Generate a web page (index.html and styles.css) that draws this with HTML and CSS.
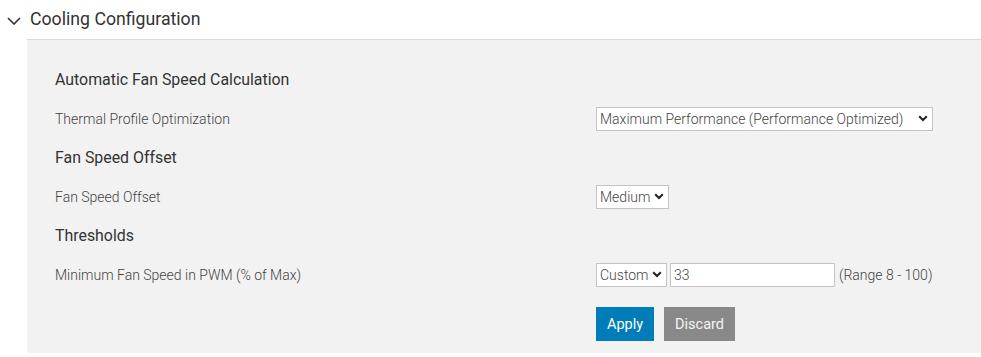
FILE: index.html
```html
<!DOCTYPE html>
<html>
<head>
<meta charset="utf-8">
<link rel="stylesheet" href="styles.css">
</head>
<body>
<div class="section">
  <div class="section-header">
    <svg class="chev" width="14" height="8" viewBox="0 0 14 8"><path d="M1 1 L7 7 L13 1" fill="none" stroke="#333" stroke-width="1.6"/></svg>
    <span class="section-title">Cooling Configuration</span>
  </div>
  <div class="panel">
    <div class="grid">
      <div class="heading">Automatic Fan Speed Calculation</div>
      <div class="label">Thermal Profile Optimization</div>
      <div class="control">
        <select class="sel sel-wide"><option>Maximum Performance (Performance Optimized)</option></select>
      </div>
      <div class="heading">Fan Speed Offset</div>
      <div class="label">Fan Speed Offset</div>
      <div class="control">
        <select class="sel sel-med"><option>Medium</option></select>
      </div>
      <div class="heading">Thresholds</div>
      <div class="label">Minimum Fan Speed in PWM (% of Max)</div>
      <div class="control">
        <select class="sel sel-custom"><option>Custom</option></select>
        <input class="txt" type="text" value="33">
        <span class="range">(Range 8 - 100)</span>
      </div>
      <div class="spacer"></div>
      <div class="buttons">
        <button class="btn btn-apply">Apply</button>
        <button class="btn btn-discard">Discard</button>
      </div>
    </div>
  </div>
</div>
</body>
</html>
```

FILE: styles.css
```css
html, body {
  margin: 0;
  padding: 0;
  background: #ffffff;
  font-family: Roboto, "Liberation Sans", sans-serif;
}

.section-header {
  height: 39px;
  display: flex;
  align-items: center;
  padding-left: 7px;
}

.chev {
  display: block;
  margin-top: 2px;
  margin-right: 9px;
}

.section-title {
  font-size: 17.7px;
  color: #333333;
  line-height: 39px;
}

.panel {
  margin-left: 27px;
  border-top: 1px solid #d9d9d9;
  background: #f2f2f2;
  padding: 20px 0 12px 28px;
}

.grid {
  display: grid;
  grid-template-columns: 541px auto;
  grid-template-rows: repeat(6, 39px) auto;
}

.heading {
  grid-column: 1 / 3;
  font-size: 15.9px;
  color: #333333;
  display: flex;
  align-items: center;
}

.label {
  font-size: 14px;
  font-weight: 300;
  color: #444444;
  display: flex;
  align-items: center;
}

.control {
  display: flex;
  align-items: center;
  gap: 3px;
}

.sel {
  appearance: none;
  -webkit-appearance: none;
  height: 24px;
  border: 1px solid #c4c4c4;
  border-radius: 0;
  background-color: #ffffff;
  background-image: url("data:image/svg+xml;utf8,<svg xmlns='http://www.w3.org/2000/svg' width='10' height='7' viewBox='0 0 10 7'><path d='M1.2 1.2 L5 5 L8.8 1.2' fill='none' stroke='%23222' stroke-width='2'/></svg>");
  background-repeat: no-repeat;
  background-position: right 4px center;
  font-family: Roboto, "Liberation Sans", sans-serif;
  font-size: 14px;
  font-weight: 300;
  color: #444444;
  padding: 0 16px 0 3px;
  margin: 0;
  outline: none;
}

.sel-wide { width: 337px; }
.sel-med { width: 73px; }
.sel-custom { width: 71px; }

.txt {
  width: 165px;
  height: 24px;
  box-sizing: border-box;
  border: 1px solid #c4c4c4;
  background: #ffffff;
  font-family: Roboto, "Liberation Sans", sans-serif;
  font-size: 14px;
  font-weight: 300;
  color: #444444;
  padding: 0 3px;
  margin: 0;
  outline: none;
}

.range {
  font-size: 14px;
  font-weight: 300;
  color: #444444;
  margin-left: 1px;
}

.spacer { grid-column: 1; }

.buttons {
  grid-column: 2;
  display: flex;
  gap: 10px;
  margin-top: 13px;
  height: 34px;
}

.btn {
  height: 34px;
  border: none;
  border-radius: 0;
  font-family: Roboto, "Liberation Sans", sans-serif;
  font-size: 14.5px;
  padding: 0;
  margin: 0;
}

.btn-apply {
  width: 58px;
  background: #007db8;
  color: #ffffff;
}

.btn-discard {
  width: 71px;
  background: #898989;
  color: #f4f4f4;
}
```
